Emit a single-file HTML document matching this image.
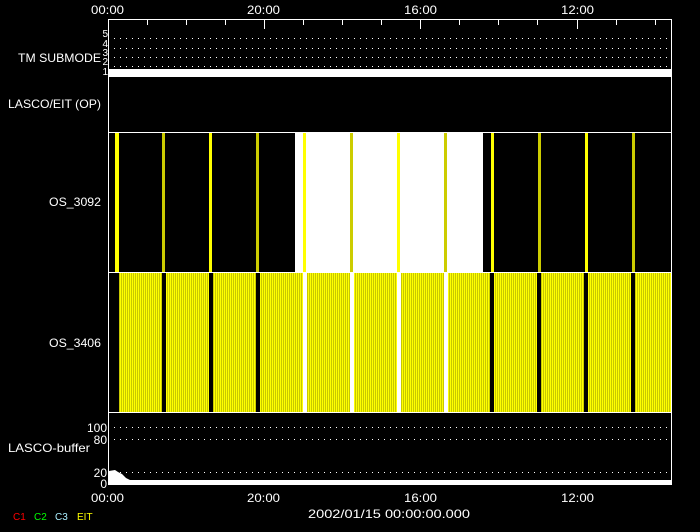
<!DOCTYPE html>
<html><head><meta charset="utf-8"><style>
html,body{margin:0;padding:0;background:#000;width:700px;height:532px;overflow:hidden}
svg text{font-family:"Liberation Sans",sans-serif;font-size:12px;fill:#fff}
</style></head><body>
<svg width="700" height="532" xmlns="http://www.w3.org/2000/svg">
<defs>
<pattern id="st" x="0" y="0" width="2" height="10" patternUnits="userSpaceOnUse">
<rect width="1" height="10" fill="#ffff00"/><rect x="1" width="1" height="10" fill="#c8c800"/>
</pattern>
</defs>
<rect width="700" height="532" fill="#000"/>
<rect x="109" y="69" width="562" height="8" fill="#fff"/>
<rect x="295" y="133" width="188" height="140" fill="#fff"/>
<rect x="119" y="273" width="552" height="140" fill="url(#st)"/>
<g>
<rect x="162" y="273" width="4" height="140" fill="#000"/>
<rect x="209" y="273" width="4" height="140" fill="#000"/>
<rect x="256" y="273" width="4" height="140" fill="#000"/>
<rect x="303" y="273" width="4" height="140" fill="#fff"/>
<rect x="350" y="273" width="4" height="140" fill="#fff"/>
<rect x="397" y="273" width="4" height="140" fill="#fff"/>
<rect x="444" y="273" width="4" height="140" fill="#fff"/>
<rect x="490" y="273" width="4" height="140" fill="#000"/>
<rect x="537" y="273" width="4" height="140" fill="#000"/>
<rect x="584" y="273" width="4" height="140" fill="#000"/>
<rect x="631" y="273" width="4" height="140" fill="#000"/>
</g>
<g>
<rect x="115" y="133" width="4" height="140" fill="#ff0"/>
<rect x="162" y="133" width="3" height="140" fill="#cc0"/>
<rect x="209" y="133" width="3" height="140" fill="#ff0"/>
<rect x="256" y="133" width="3" height="140" fill="#cc0"/>
<rect x="303" y="133" width="3" height="140" fill="#ff0"/>
<rect x="350" y="133" width="3" height="140" fill="#cc0"/>
<rect x="397" y="133" width="3" height="140" fill="#ff0"/>
<rect x="444" y="133" width="3" height="140" fill="#cc0"/>
<rect x="491" y="133" width="3" height="140" fill="#ff0"/>
<rect x="538" y="133" width="3" height="140" fill="#cc0"/>
<rect x="585" y="133" width="3" height="140" fill="#ff0"/>
<rect x="632" y="133" width="3" height="140" fill="#cc0"/>
</g>
<g stroke="#fff" stroke-width="1" stroke-dasharray="1 5">
<line x1="114" y1="38.5" x2="671" y2="38.5"/>
<line x1="114" y1="48.5" x2="671" y2="48.5"/>
<line x1="114" y1="57.5" x2="671" y2="57.5"/>
<line x1="114" y1="66.5" x2="671" y2="66.5"/>
<line x1="114" y1="427.5" x2="671" y2="427.5"/>
<line x1="114" y1="439.5" x2="671" y2="439.5"/>
<line x1="114" y1="472.5" x2="671" y2="472.5"/>
</g>
<rect x="109" y="480" width="562" height="4" fill="#fff"/>
<polygon points="109,484 109,471 115,470 118,472 122,474 126,478 130,480 130,484" fill="#fff"/>
<g stroke="#fff" stroke-width="1" fill="none">
<rect x="108.5" y="19.5" width="563" height="465"/>
<line x1="108" y1="132.5" x2="671" y2="132.5"/>
<line x1="108" y1="272.5" x2="671" y2="272.5"/>
<line x1="108" y1="412.5" x2="671" y2="412.5"/>
</g>
<g stroke="#fff">
<line x1="147.5" y1="20" x2="147.5" y2="25"/><line x1="186.5" y1="20" x2="186.5" y2="25"/><line x1="225.5" y1="20" x2="225.5" y2="25"/>
<line x1="264.5" y1="20" x2="264.5" y2="29"/><line x1="303.5" y1="20" x2="303.5" y2="25"/><line x1="342.5" y1="20" x2="342.5" y2="25"/><line x1="381.5" y1="20" x2="381.5" y2="25"/>
<line x1="420.5" y1="20" x2="420.5" y2="29"/><line x1="459.5" y1="20" x2="459.5" y2="25"/><line x1="498.5" y1="20" x2="498.5" y2="25"/><line x1="537.5" y1="20" x2="537.5" y2="25"/>
<line x1="577.5" y1="20" x2="577.5" y2="29"/><line x1="616.5" y1="20" x2="616.5" y2="25"/><line x1="655.5" y1="20" x2="655.5" y2="25"/>
</g>
<text x="91" y="14" textLength="33" lengthAdjust="spacingAndGlyphs">00:00</text>
<text x="247" y="14" textLength="33" lengthAdjust="spacingAndGlyphs">20:00</text>
<text x="404" y="14" textLength="33" lengthAdjust="spacingAndGlyphs">16:00</text>
<text x="561" y="14" textLength="33" lengthAdjust="spacingAndGlyphs">12:00</text>
<text x="91" y="502" textLength="33" lengthAdjust="spacingAndGlyphs">00:00</text>
<text x="247" y="502" textLength="33" lengthAdjust="spacingAndGlyphs">20:00</text>
<text x="404" y="502" textLength="33" lengthAdjust="spacingAndGlyphs">16:00</text>
<text x="561" y="502" textLength="33" lengthAdjust="spacingAndGlyphs">12:00</text>
<text x="308" y="518" textLength="162" lengthAdjust="spacingAndGlyphs">2002/01/15 00:00:00.000</text>
<text x="18" y="62" textLength="83" lengthAdjust="spacingAndGlyphs">TM SUBMODE</text>
<text x="8" y="108" textLength="93" lengthAdjust="spacingAndGlyphs">LASCO/EIT (OP)</text>
<text x="49" y="206" textLength="52" lengthAdjust="spacingAndGlyphs">OS_3092</text>
<text x="49" y="347" textLength="52" lengthAdjust="spacingAndGlyphs">OS_3406</text>
<text x="8" y="452" textLength="82" lengthAdjust="spacingAndGlyphs">LASCO-buffer</text>
<g text-anchor="end">
<text x="108" y="37" style="font-size:10px">5</text>
<text x="108" y="47" style="font-size:10px">4</text>
<text x="108" y="56" style="font-size:10px">3</text>
<text x="108" y="65" style="font-size:10px">2</text>
<text x="108" y="75" style="font-size:10px">1</text>
<text x="107" y="432">100</text>
<text x="107" y="444">80</text>
<text x="107" y="477">20</text>
<text x="107" y="488">0</text>
</g>
<text x="13" y="520" style="font-size:10px;fill:#f00">C1</text>
<text x="34" y="520" style="font-size:10px;fill:#0f0">C2</text>
<text x="55" y="520" style="font-size:10px;fill:#aef">C3</text>
<text x="77" y="520" style="font-size:10px;fill:#ff0">EIT</text>
</svg>
</body></html>
